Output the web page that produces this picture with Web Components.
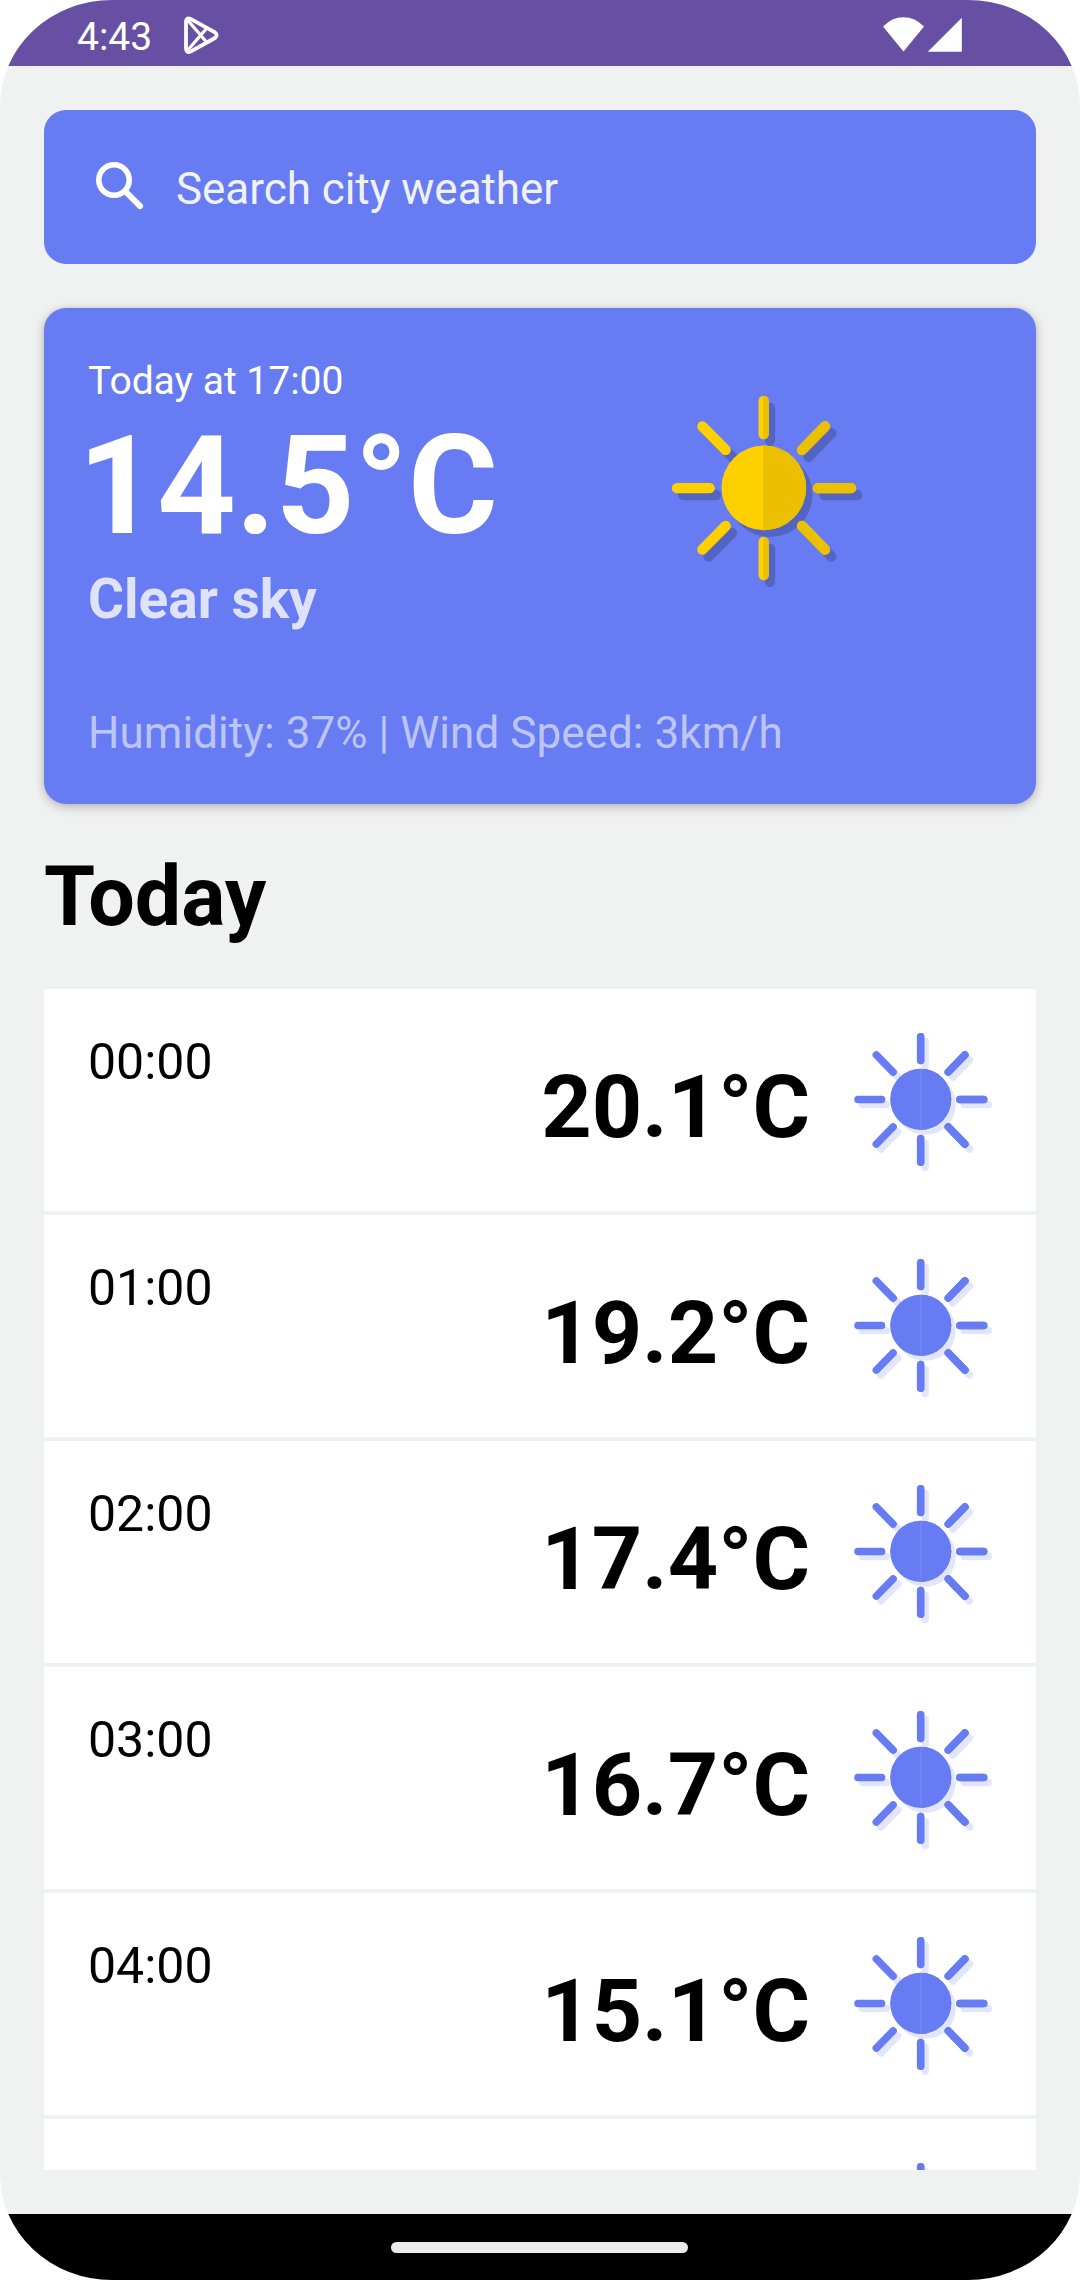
<!DOCTYPE html>
<html lang="en">
<head>
<meta charset="utf-8">
<title>Weather</title>
<style>
  html, body { margin: 0; background: #fff; }
  body { width: 1080px; height: 2280px; overflow: hidden; font-family: Roboto, "Liberation Sans", sans-serif; --blue: #677cf3; --page: #f0f2f1; }
</style>
</head>
<body>
<weather-screen>
  <status-bar slot="status" time="4:43"></status-bar>
  <search-field>Search city weather</search-field>
  <current-card>
    <span slot="when">Today at 17:00</span>
    <span slot="temp">14.5°C</span>
    <span slot="sky">Clear sky</span>
    <span slot="detail">Humidity: 37% | Wind Speed: 3km/h</span>
  </current-card>
  <section-title>Today</section-title>
  <hour-list>
    <hour-row time="00:00" temp="20.1°C"></hour-row>
    <hour-row time="01:00" temp="19.2°C"></hour-row>
    <hour-row time="02:00" temp="17.4°C"></hour-row>
    <hour-row time="03:00" temp="16.7°C"></hour-row>
    <hour-row time="04:00" temp="15.1°C"></hour-row>
    <hour-row></hour-row>
  </hour-list>
  <nav-bar slot="nav"></nav-bar>
</weather-screen>
<script>
const define = (name, render) => customElements.define(name, class extends HTMLElement {
  connectedCallback() {
    if (!this.shadowRoot) this.attachShadow({ mode: 'open' }).innerHTML = render(this);
  }
});

define('weather-screen', () => `
<style>
  :host { display: flex; flex-direction: column; width: 1080px; height: 2280px; background: var(--page); border-radius: 112px / 106px; overflow: hidden; }
  main { flex: 1; min-height: 0; box-sizing: border-box; padding: 44px; display: flex; flex-direction: column; gap: 44px; }
</style>
<slot name="status"></slot><main><slot></slot></main><slot name="nav"></slot>`);

define('status-bar', el => `
<style>
  :host { display: flex; align-items: flex-start; height: 66px; flex: none; box-sizing: border-box; background: #6750a3; color: #fff; padding: 0 118px 0 77px; }
  .time { width: 107px; font-size: 39px; line-height: 46px; padding-top: 14px; white-space: nowrap; }
  .gap { flex: 1; }
  svg { display: block; flex: none; margin-top: 16px; }
</style>
<span class="time">${el.getAttribute('time')}</span>
<svg width="36" height="40" viewBox="0 0 36 40" fill="none" stroke="#fff" stroke-width="3.800" stroke-linejoin="round" stroke-linecap="round">
  <path d="M2 5.500V32.500Q2.100 37.300 6.500 35.600L31 22Q34.300 19.200 31 16.400L6.500 2.900Q2.400 1.200 2 5.500Z"/>
  <path stroke-width="3.200" d="M3.500 4L22.500 26M3.500 34.500L22.500 12.500"/>
</svg>
<span class="gap"></span>
<svg width="80" height="37" viewBox="0 0 80 37" fill="#fff">
  <path d="M1 10.500Q10 1.200 21.500 1.200T42 10.500L21.500 35.500Z"/>
  <path d="M79.800 1.800V35.800H45.800Z"/>
</svg>`);

define('search-field', () => `
<style>
  :host { display: flex; align-items: center; height: 154px; flex: none; box-sizing: border-box; padding: 0 44px; gap: 24px; border-radius: 22px; background: var(--blue); color: #f0f2f1; font-size: 44px; line-height: 52px; letter-spacing: -.05px; }
  svg { display: block; }
  span { padding-top: 4px; }
</style>
<svg width="64" height="66" viewBox="0 0 64 66" fill="none" stroke="#fff"><circle cx="26" cy="26" r="15.200" stroke-width="5.600"/><path d="M38 38L52.100 52.100" stroke-width="6" stroke-linecap="round"/></svg>
<span><slot></slot></span>`);

define('sun-icon', el => {
  const soft = el.hasAttribute('soft');
  const left = soft ? '#677cf3' : '#ffd000', right = soft ? '#677cf3' : '#ebc000';
  const shade = soft ? '#e1e5fd' : '#5364c2';
  const rays = ['M371 93V192', 'M371 516V615', 'M111 354.500H209', 'M534 354.500H633', 'M187 169L257 240', 'M555 169L486 240', 'M187 539L257 468', 'M555 539L486 468'].map(d => `<path d="${d}"/>`).join('');
  const art = c => `<g fill="${c}" stroke="${c}"><circle cx="371.500" cy="353.500" r="127" stroke="none"/>${rays}</g>`;
  return `
<style>:host { display: block; } svg { display: block; width: 100%; height: 100%; }</style>
<svg viewBox="96 78 570 573" stroke-width="31" stroke-linecap="round">
  <defs><clipPath id="half"><path d="M369.500 60H700V700H369.500Z"/></clipPath></defs>
  <g transform="translate(19 20.500)">${art(shade)}</g>
  ${art(left)}
  <g clip-path="url(#half)">${art(right)}</g>
  ${soft ? '<path d="M372 227V480" stroke="#7588f5" stroke-width="5" stroke-linecap="butt"/>' : ''}
</svg>`;
});

define('current-card', () => `
<style>
  :host { display: flex; flex-direction: column; height: 496px; flex: none; box-sizing: border-box; padding: 44px; border-radius: 22px; background: var(--blue); color: #fff; white-space: nowrap; box-shadow: 0 3px 11px rgba(0,0,0,.24), 0 0 4px rgba(0,0,0,.08); }
  .top { display: flex; height: 284px; }
  .text { width: 584px; }
  .when { font-size: 39px; line-height: 58px; }
  .temp { font-size: 137.5px; line-height: 152px; font-weight: 700; margin-left: -10px; }
  .sky { font-size: 55px; line-height: 74px; font-weight: 700; color: #dee2fb; }
  .detail { font-size: 44px; line-height: 60px; letter-spacing: .05px; margin-top: 67px; color: #bcc5f7; }
  sun-icon { width: 190px; height: 191px; margin-top: 44px; }
</style>
<div class="top">
  <div class="text">
    <div class="when"><slot name="when"></slot></div>
    <div class="temp"><slot name="temp"></slot></div>
    <div class="sky"><slot name="sky"></slot></div>
  </div>
  <sun-icon></sun-icon>
</div>
<div class="detail"><slot name="detail"></slot></div>`);

define('section-title', () => `
<style>:host { display: block; height: 97px; flex: none; font-size: 82.5px; line-height: 97px; font-weight: 700; color: #000; }</style>
<slot></slot>`);

define('hour-list', () => `
<style>:host { display: flex; flex-direction: column; gap: 4px; flex: 1; min-height: 0; overflow: hidden; }</style>
<slot></slot>`);

define('hour-row', el => `
<style>
  :host { display: flex; align-items: flex-start; height: 222px; flex: none; box-sizing: border-box; padding: 44px 44px 40px; background: #fff; color: #000; white-space: nowrap; }
  .time { flex: 1; font-size: 50px; line-height: 58px; }
  .temp { font-size: 88px; line-height: 104px; font-weight: 700; margin: 22px 44px 0 0; }
  sun-icon { width: 138px; height: 138px; }
</style>
<span class="time">${el.getAttribute('time') || ''}</span>
<span class="temp">${el.getAttribute('temp') || ''}</span>
<sun-icon soft></sun-icon>`);

define('nav-bar', () => `
<style>
  :host { display: flex; justify-content: center; align-items: center; height: 66px; flex: none; background: #000; }
  i { width: 297px; height: 11px; margin-right: 1px; border-radius: 6px; background: #ebebeb; }
</style>
<i></i>`);
</script>
</body>
</html>
